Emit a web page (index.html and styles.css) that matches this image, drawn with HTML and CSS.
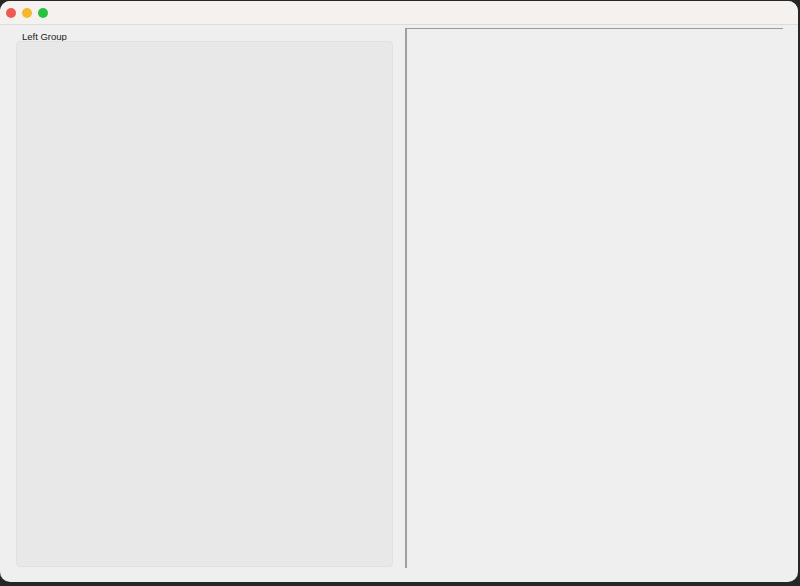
FILE: index.html
```html
<!DOCTYPE html>
<html>
<head>
<meta charset="utf-8">
<link rel="stylesheet" href="styles.css">
</head>
<body>
<div class="window">
  <div class="titlebar">
    <span class="light red"></span>
    <span class="light yellow"></span>
    <span class="light green"></span>
  </div>
  <div class="content">
    <div class="left">
      <div class="group-label">Left Group</div>
      <div class="group-box"></div>
    </div>
    <div class="right">
      <div class="panel"></div>
    </div>
  </div>
</div>
</body>
</html>
```
FILE: styles.css
```css
html, body {
  margin: 0;
  padding: 0;
  background: #262626;
  width: 800px;
  height: 586px;
  overflow: hidden;
  font-family: "Liberation Sans", Arial, sans-serif;
}
.window {
  margin-top: 1px;
  width: 798px;
  height: 581px;
  background: #efefef;
  border-radius: 10px;
  overflow: hidden;
  display: flex;
  flex-direction: column;
}
.titlebar {
  height: 23px;
  background: #f4f1ef;
  border-bottom: 1px solid #dedcda;
  display: flex;
  align-items: center;
  padding-left: 6px;
  gap: 6px;
  box-sizing: content-box;
}
.light {
  width: 10px;
  height: 10px;
  border-radius: 50%;
  display: block;
}
.red { background: #ee5a52; }
.yellow { background: #f5b82e; }
.green { background: #28c23f; }
.content {
  flex: 1;
  display: flex;
  padding: 3px 16px 14px 16px;
  gap: 12px;
}
.left {
  width: 377px;
  display: flex;
  flex-direction: column;
}
.group-label {
  font-size: 9.5px;
  color: #1a1a1a;
  padding-left: 6px;
  padding-top: 4px;
  height: 9px;
  line-height: 10px;
}
.group-box {
  flex: 1;
  background: #e8e8e8;
  border: 1px solid #e0e0e0;
  border-radius: 4px;
  margin-bottom: 1px;
}
.right {
  flex: 1;
  display: flex;
}
.panel {
  flex: 1;
  border-left: 2px solid #a0a0a0;
  border-top: 1px solid #9a9a9a;
  background: #efefef;
  margin-right: -1px;
}
```
